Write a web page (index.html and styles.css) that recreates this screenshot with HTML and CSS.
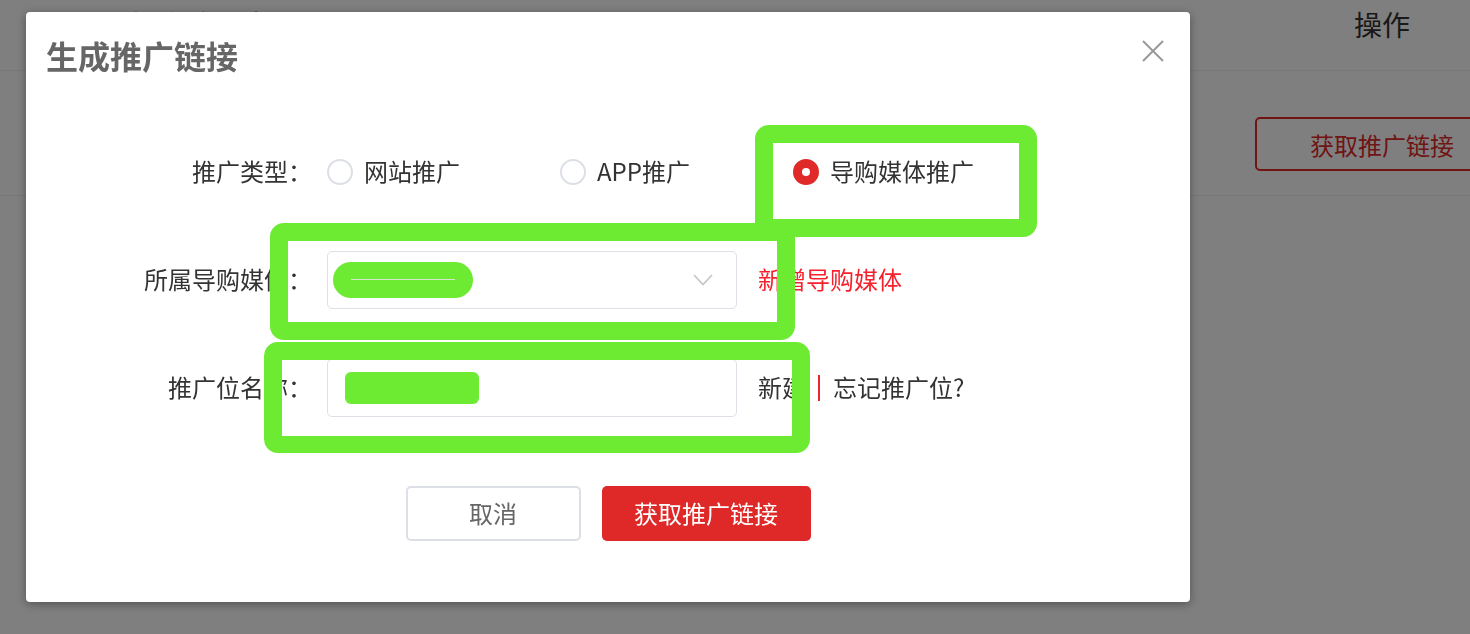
FILE: index.html
```html
<!DOCTYPE html>
<html lang="zh-CN">
<head>
<meta charset="utf-8">
<title>生成推广链接</title>
<link rel="stylesheet" href="styles.css">
</head>
<body>
<div class="page">
  <div class="trow thead">
    <div class="cell cell-main">推广位信息名称</div>
    <div class="cell cell-op">操作</div>
  </div>
  <div class="trow tbody">
    <div class="cell cell-main"></div>
    <div class="cell cell-op"><button class="ghost-btn">获取推广链接</button></div>
  </div>
</div>

<div class="mask"></div>

<div class="modal">
  <button class="close" aria-label="关闭">
    <svg width="22" height="22" viewBox="0 0 22 22"><path d="M1 1 L21 21 M21 1 L1 21" stroke="#9a9a9a" stroke-width="2" fill="none"/></svg>
  </button>
  <div class="title">生成推广链接</div>

  <div class="form">
    <div class="row">
      <div class="label">推广类型：</div>
      <div class="radios">
        <label class="radio"><span class="dot"></span><span class="rtext">网站推广</span></label>
        <label class="radio"><span class="dot"></span><span class="rtext">APP推广</span></label>
        <label class="radio checked"><span class="dot"></span><span class="rtext">导购媒体推广</span></label>
      </div>
    </div>
    <div class="row">
      <div class="label">所属导购媒体：</div>
      <div class="field select">
        <span class="pill"><span class="pill-line"></span></span>
        <svg class="chev" width="20" height="12" viewBox="0 0 20 12"><path d="M1 1 L10 10.5 L19 1" stroke="#c0c4cc" stroke-width="1.6" fill="none"/></svg>
      </div>
      <a class="red-link">新增导购媒体</a>
    </div>
    <div class="row">
      <div class="label">推广位名称：</div>
      <div class="field input">
        <span class="mask-rect"></span>
      </div>
      <span class="after">新建</span><span class="bar"></span><span class="after2">忘记推广位?</span>
    </div>
  </div>

  <div class="footer">
    <button class="btn cancel">取消</button>
    <button class="btn primary">获取推广链接</button>
  </div>

  <div class="mark mark1"></div>
  <div class="mark mark2"></div>
  <div class="mark mark3"></div>
</div>
</body>
</html>
```

FILE: styles.css
```css
html, body {
  margin: 0;
  padding: 0;
}
body {
  width: 1470px;
  height: 634px;
  overflow: hidden;
  background: #fff;
  font-family: "Noto Sans CJK SC", "Noto Sans", sans-serif;
  color: #333;
}
button {
  font-family: inherit;
}

/* background page */
.trow {
  display: flex;
  border-bottom: 1px solid #eeeef4;
}
.thead {
  height: 70px;
  font-size: 28px;
  line-height: 28px;
  color: #333;
}
.thead .cell {
  padding-top: 10px;
}
.tbody {
  height: 124px;
}
.cell-main {
  flex: 1;
  padding-left: 130px;
}
.cell-op {
  width: 215px;
  flex-shrink: 0;
  box-sizing: border-box;
}
.thead .cell-op {
  padding-left: 99px;
}
.ghost-btn {
  margin-top: 46px;
  width: 260px;
  height: 54px;
  border: 2px solid #e02828;
  border-radius: 5px;
  background: #fff;
  color: #e02828;
  font-size: 24px;
  text-align: left;
  padding: 0 0 0 53px;
}

.mask {
  position: fixed;
  inset: 0;
  background: rgba(0, 0, 0, 0.5);
}

/* modal */
.modal {
  position: absolute;
  left: 26px;
  top: 12px;
  width: 1164px;
  height: 590px;
  box-sizing: border-box;
  background: #fff;
  border-radius: 4px;
  box-shadow: 0 2px 10px rgba(0, 0, 0, 0.35);
  padding: 27px 20px 0;
}
.close {
  position: absolute;
  right: 26px;
  top: 28px;
  width: 22px;
  height: 22px;
  padding: 0;
  border: 0;
  background: none;
}
.close svg {
  display: block;
}
.title {
  font-size: 32px;
  line-height: 32px;
  font-weight: 700;
  color: #666;
}

.form {
  margin-top: 72px;
  display: flex;
  flex-direction: column;
  gap: 50px;
  font-size: 24px;
}
.row {
  display: flex;
  align-items: center;
  height: 58px;
}
.label {
  width: 266px;
  flex-shrink: 0;
  margin-right: 15px;
  text-align: right;
  color: #333;
  white-space: nowrap;
  padding-bottom: 3px;
}
.radios {
  display: flex;
}
.radio {
  display: flex;
  align-items: center;
  width: 233px;
  color: #333;
}
.rtext {
  padding-bottom: 3px;
}
.dot {
  width: 26px;
  height: 26px;
  box-sizing: border-box;
  border: 2px solid #dcdfe6;
  border-radius: 50%;
  margin-right: 11px;
  flex-shrink: 0;
  display: flex;
  align-items: center;
  justify-content: center;
}
.radio.checked .dot {
  background: #e02a2a;
  border-color: #e02a2a;
}
.radio.checked .dot::after {
  content: "";
  width: 8px;
  height: 8px;
  border-radius: 50%;
  background: #fff;
}

.field {
  width: 410px;
  height: 58px;
  box-sizing: border-box;
  border: 1.5px solid #dcdfe6;
  border-radius: 5px;
  display: flex;
  align-items: center;
  flex-shrink: 0;
}
.select {
  justify-content: space-between;
  padding: 0 23px 0 5px;
}
.pill {
  width: 140px;
  height: 36px;
  border-radius: 18px;
  background: #6ceb32;
  display: flex;
  align-items: center;
  padding: 0 18px 2px;
  box-sizing: border-box;
}
.pill-line {
  flex: 1;
  height: 1px;
  background: #d8e6d0;
}
.chev {
  display: block;
}
.input {
  padding-left: 17px;
}
.mask-rect {
  width: 134px;
  height: 32px;
  border-radius: 6px;
  background: #6ceb32;
}
.red-link {
  margin-left: 21px;
  color: #f5222d;
  cursor: pointer;
  padding-bottom: 3px;
}
.after {
  margin-left: 21px;
  color: #333;
  padding-bottom: 3px;
}
.bar {
  width: 2px;
  height: 26px;
  background: #f5222d;
  margin: 0 13px 0 12px;
}
.after2 {
  color: #333;
  padding-bottom: 3px;
}

.footer {
  margin-top: 69px;
  display: flex;
  justify-content: center;
  gap: 21px;
}
.btn {
  height: 55px;
  font-size: 24px;
  border-radius: 5px;
  padding: 0 0 3px;
  cursor: pointer;
}
.cancel {
  width: 175px;
  border: 2px solid #dcdfe6;
  background: #fff;
  color: #666;
}
.primary {
  width: 209px;
  border: 0;
  background: #df2828;
  color: #fff;
}

/* green annotation boxes drawn over the dialog */
.mark {
  position: absolute;
  box-sizing: border-box;
  border: 18px solid #6ceb32;
  border-radius: 14px;
}
.mark1 {
  left: 729px;
  top: 113px;
  width: 282px;
  height: 112px;
}
.mark2 {
  left: 244px;
  top: 211px;
  width: 525px;
  height: 117px;
}
.mark3 {
  left: 238px;
  top: 330px;
  width: 546px;
  height: 111px;
  border-bottom-width: 17px;
}
```
